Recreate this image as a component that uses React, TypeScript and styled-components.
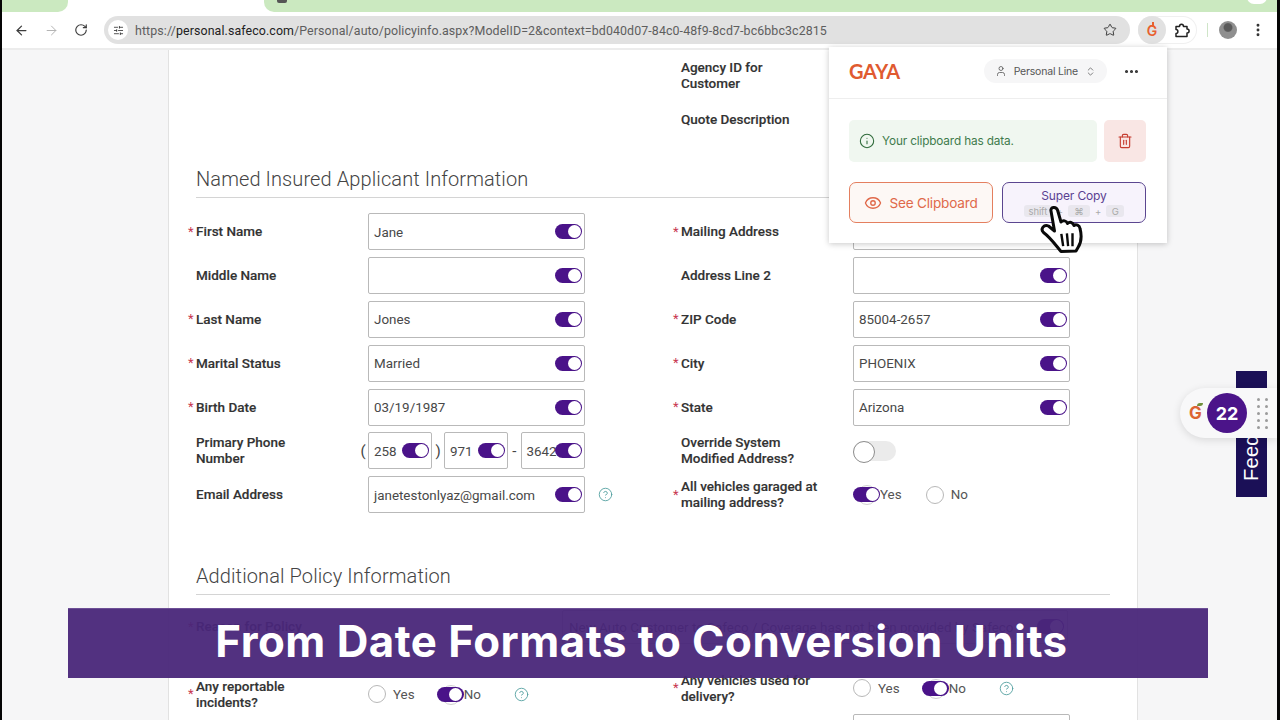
import React from "react";
import styled, { createGlobalStyle } from "styled-components";
import {
  ArrowLeft,
  ArrowRight,
  RotateCw,
  SlidersHorizontal,
  Star,
  EllipsisVertical,
  User,
  ChevronsUpDown,
  Ellipsis,
  Info,
  Trash2,
  Eye,
  CircleHelp,
} from "lucide-react";

const Global = createGlobalStyle`
  html, body { margin: 0; padding: 0; background: #050505; }
  * { box-sizing: border-box; }
`;

const Frame = styled.div`
  position: relative;
  width: 1280px;
  height: 720px;
  overflow: hidden;
  padding: 0 3px 0 2px;
  background: #050505;
  font-family: Roboto, "Liberation Sans", sans-serif;
`;

const Browser = styled.div`
  display: flex;
  flex-direction: column;
  height: 100%;
  background: #f6f6f7;
`;

const TabStrip = styled.div`
  display: grid;
  grid-template-columns: 66px 196px 1fr;
  height: 12px;
  background: #fff;
  flex: none;
`;

const GreenTab = styled.div<{ $side: "left" | "right" }>`
  position: relative;
  background: #cbe9c0;
  border-radius: ${(p) => (p.$side === "left" ? "0 0 10px 0" : "0 0 0 10px")};
`;

const TabGlyph = styled.span`
  position: absolute;
  left: 13px;
  top: 0;
  width: 10px;
  height: 3px;
  background: #555;
  border-radius: 0 0 2px 2px;
`;

const WindowDot = styled.span`
  position: absolute;
  right: 10px;
  top: -10px;
  width: 20px;
  height: 14px;
  background: #fff;
  border-radius: 8px;
`;

const Toolbar = styled.div`
  display: flex;
  align-items: center;
  height: 38px;
  flex: none;
  padding-left: 4px;
  background: #fff;
  border-bottom: 2px solid #ececec;
  position: relative;
`;

const NavButton = styled.button<{ $muted?: boolean }>`
  display: flex;
  align-items: center;
  justify-content: center;
  width: 30px;
  height: 28px;
  padding: 0;
  border: 0;
  background: transparent;
  color: ${(p) => (p.$muted ? "#b4b4b4" : "#3d3d3d")};
`;

const AddressBar = styled.div`
  display: flex;
  align-items: center;
  width: 1026px;
  height: 28px;
  margin-left: 8px;
  padding: 0 13px 0 4px;
  border-radius: 14px;
  background: #e1e1e1;
`;

const SiteChip = styled.span`
  display: flex;
  align-items: center;
  justify-content: center;
  width: 20px;
  height: 20px;
  border-radius: 50%;
  background: #fff;
  color: #333;
  flex: none;
`;

const Url = styled.span`
  flex: 1;
  margin-left: 7px;
  font-family: Roboto, sans-serif;
  font-size: 12.4px;
  letter-spacing: 0.1px;
  color: #5e5e5e;
  white-space: nowrap;
`;

const UrlHost = styled.span`
  color: #222;
`;

const ExtensionGroup = styled.div`
  display: flex;
  align-items: center;
  height: 28px;
  margin-left: 8px;
  border-radius: 14px;
  box-shadow: inset 0 0 0 1px #f0f0f0;
`;

const GayaExt = styled.span`
  position: relative;
  display: flex;
  align-items: center;
  justify-content: center;
  width: 28px;
  height: 28px;
  border-radius: 50%;
  background: #e1e1e1;
  font-family: Inter, sans-serif;
  font-weight: 600;
  font-size: 14px;
  color: #e8602f;
  &::after {
    content: "";
    position: absolute;
    left: 14px;
    top: 6px;
    width: 1.5px;
    height: 5px;
    background: #e8602f;
  }
`;

const PuzzleSlot = styled.span`
  display: flex;
  align-items: center;
  justify-content: center;
  width: 31px;
  color: #222;
`;

const ToolbarRule = styled.span`
  width: 1px;
  height: 14px;
  margin-left: 10px;
  background: #cfe5c8;
`;

const Avatar = styled.span`
  width: 18px;
  height: 18px;
  margin-left: 11px;
  border-radius: 50%;
  background: radial-gradient(circle at 50% 36%, #5a5a5a 0 26%, #8f8f8f 34% 100%);
`;

const KebabSlot = styled.span`
  display: flex;
  margin-left: 13px;
  color: #333;
`;

const Viewport = styled.div`
  flex: 1;
  overflow: hidden;
  padding-left: 166px;
`;

const Card = styled.main`
  width: 970px;
  height: 100%;
  padding: 10px 27px 0 19px;
  background: #fff;
  border-left: 1px solid #e2e2e2;
  border-right: 1px solid #e2e2e2;
`;

const TopFields = styled.div`
  display: flex;
  flex-direction: column;
  gap: 20px;
  margin-left: 493px;
  margin-top: -1px;
`;

const TopLabel = styled.div`
  width: 172px;
  font-size: 13.5px;
  font-weight: 500;
  line-height: 16px;
  color: #333;
  -webkit-text-stroke: 0.15px #333;
`;

const SectionTitle = styled.h2<{ $top: number }>`
  margin: ${(p) => p.$top}px 0 15px 8px;
  padding-bottom: 6px;
  border-bottom: 1px solid #d4d4d4;
  font-size: 20px;
  font-weight: 300;
  line-height: 24px;
  letter-spacing: 0.1px;
  color: #444;
`;

const FormGrid = styled.div`
  display: grid;
  grid-template-columns: 485px 1fr;
  grid-auto-rows: 37.8px;
  row-gap: 6px;
`;

const FieldRow = styled.div<{ $shift?: number }>`
  display: grid;
  grid-template-columns: 8px 172px 217px auto;
  align-items: center;
  height: 37.8px;
  margin-top: ${(p) => p.$shift ?? 0}px;
`;

const Star2 = styled.span`
  font-size: 13px;
  line-height: 16px;
  color: #c8384f;
`;

const Label = styled.label`
  margin-top: -1px;
  font-size: 13.5px;
  font-weight: 500;
  line-height: 16px;
  color: #333;
  -webkit-text-stroke: 0.15px #333;
`;

const InputBox = styled.div`
  display: flex;
  align-items: center;
  height: 37px;
  padding: 0 2px 0 5px;
  background: #fff;
  border: 1px solid #b9b9b9;
  border-radius: 2px;
`;

const Value = styled.span`
  flex: 1;
  min-width: 0;
  padding-top: 1px;
  font-size: 13.4px;
  color: #484848;
  white-space: nowrap;
`;

const Toggle = styled.span`
  position: relative;
  z-index: 1;
  flex: none;
  width: 27px;
  height: 15px;
  border-radius: 8px;
  background: #4a1389;
  &::after {
    content: "";
    position: absolute;
    right: 1.5px;
    top: 1px;
    width: 13px;
    height: 13px;
    border-radius: 50%;
    background: #fff;
  }
`;

const SwitchOff = styled.span`
  position: relative;
  display: block;
  width: 43px;
  height: 20px;
  border-radius: 10px;
  background: #ebebeb;
  &::after {
    content: "";
    position: absolute;
    left: 0;
    top: 0;
    width: 20px;
    height: 20px;
    border-radius: 50%;
    background: #fff;
    border: 1px solid #8d8d8d;
  }
`;

const PhoneGroup = styled.div`
  display: grid;
  grid-template-columns: 10px 64px 12px 64px 12.5px 64.5px;
  align-items: center;
  margin-left: -10px;
  width: 227px;
`;

const PhoneSep = styled.span`
  text-align: center;
  font-size: 15px;
  color: #444;
`;

const HelpMark = styled.span<{ $gap: number }>`
  display: flex;
  margin-left: ${(p) => p.$gap}px;
  color: #4f9e9e;
`;

const RadioLine = styled.div`
  display: flex;
  align-items: center;
  font-size: 13.4px;
  color: #555;
`;

const Radio = styled.span`
  width: 18px;
  height: 18px;
  margin-right: 7px;
  border-radius: 50%;
  background: #fff;
  border: 1px solid #b8b8b8;
`;

const OptionText = styled.span<{ $gap: number }>`
  margin-right: ${(p) => p.$gap}px;
`;

const RadioToggle = styled.span`
  position: relative;
  display: flex;
  &::before {
    content: "";
    position: absolute;
    left: 4px;
    top: -2px;
    width: 18px;
    height: 18px;
    border-radius: 50%;
    border: 1px solid #d0d0d0;
  }
`;

const FieldStub = styled.div`
  grid-column: 3;
  height: 37px;
  margin-top: 7px;
  background: #fff;
  border: 1px solid #b9b9b9;
  border-radius: 2px;
`;

const ReasonRow = styled.div`
  display: grid;
  grid-template-columns: 8px 366px 1fr;
  align-items: center;
  height: 34px;
  margin-top: 3px;
`;

const ReasonBox = styled.div`
  display: flex;
  align-items: center;
  width: 506px;
  height: 34px;
  padding: 0 3px 0 6px;
  border: 1px solid #b9b9b9;
  border-radius: 2px;
`;

const LowerGrid = styled.div`
  display: grid;
  grid-template-columns: 485px 1fr;
  margin-top: 30px;
`;

const Popup = styled.aside`
  position: absolute;
  z-index: 5;
  left: 829px;
  top: 47px;
  width: 338px;
  height: 196px;
  background: #fff;
  box-shadow: 0 1px 6px rgba(0, 0, 0, 0.22);
  font-family: Inter, sans-serif;
`;

const PopupHead = styled.header`
  display: flex;
  align-items: center;
  height: 52px;
  padding: 0 27px 3px 20px;
  border-bottom: 1px solid #eeeeee;
`;

const GayaLogo = styled.span`
  flex: 1;
  font-family: Lato, sans-serif;
  font-size: 20px;
  font-weight: 700;
  letter-spacing: -0.3px;
  color: #e05a30;
`;

const LinePill = styled.div`
  display: flex;
  align-items: center;
  gap: 7px;
  height: 24px;
  padding: 0 11px;
  margin-right: 16px;
  border-radius: 12px;
  background: #f6f6f7;
  font-size: 10.5px;
  letter-spacing: -0.2px;
  color: #555;
`;

const MoreButton = styled.span`
  display: flex;
  color: #333;
`;

const PopupBody = styled.div`
  display: flex;
  flex-direction: column;
  gap: 20px;
  padding: 21px 21px 0 20px;
`;

const AlertRow = styled.div`
  display: flex;
  gap: 7px;
`;

const AlertBox = styled.div`
  display: flex;
  align-items: center;
  gap: 7px;
  flex: 1;
  height: 42px;
  padding: 0 10px;
  border-radius: 5px;
  background: #f0f7f0;
  font-size: 11.8px;
  letter-spacing: -0.15px;
  color: #3f7b4c;
`;

const DeleteButton = styled.button`
  display: flex;
  align-items: center;
  justify-content: center;
  width: 42px;
  height: 42px;
  padding: 0;
  border: 0;
  border-radius: 5px;
  background: #f9e6e4;
  color: #c63d30;
`;

const ActionRow = styled.div`
  display: grid;
  grid-template-columns: 144px 144px;
  justify-content: space-between;
`;

const SeeButton = styled.button`
  display: flex;
  align-items: center;
  justify-content: center;
  gap: 7px;
  height: 41px;
  padding: 0;
  border: 1px solid #e47f5f;
  border-radius: 7px;
  background: #fdf8f5;
  font-family: Inter, sans-serif;
  font-size: 13.6px;
  letter-spacing: -0.2px;
  color: #e0694a;
`;

const CopyButton = styled.button`
  display: flex;
  flex-direction: column;
  align-items: center;
  justify-content: center;
  gap: 2px;
  height: 41px;
  padding: 0;
  border: 1px solid #5b4690;
  border-radius: 7px;
  background: #f7f3fc;
  font-family: Inter, sans-serif;
  font-size: 12px;
  letter-spacing: -0.15px;
  color: #5b3f92;
`;

const KeyRow = styled.span`
  display: flex;
  align-items: center;
  gap: 5px;
  font-size: 9.5px;
  color: #aaa;
`;

const KeyCap = styled.span<{ $w: number }>`
  display: flex;
  align-items: center;
  justify-content: center;
  width: ${(p) => p.$w}px;
  height: 12px;
  border-radius: 3px;
  background: #e9e7ee;
`;

const CursorMark = styled.svg`
  position: absolute;
  z-index: 6;
  left: 1038px;
  top: 205px;
  width: 48px;
  height: 48px;
`;

const FeedbackTab = styled.div`
  position: absolute;
  left: 1236px;
  top: 371px;
  width: 31px;
  height: 126px;
  display: flex;
  align-items: flex-start;
  justify-content: center;
  padding-bottom: 16px;
  background: #1b1057;
  overflow: hidden;
`;

const FeedbackText = styled.span`
  writing-mode: vertical-rl;
  transform: rotate(180deg);
  height: 110px;
  font-family: "Liberation Sans", sans-serif;
  font-size: 20px;
  letter-spacing: 0.3px;
  line-height: 31px;
  color: #fff;
`;

const ScoreWidget = styled.div`
  position: absolute;
  z-index: 4;
  left: 1180px;
  top: 388px;
  width: 97px;
  height: 50px;
  display: flex;
  align-items: center;
  padding-left: 9px;
  border-radius: 25px 0 0 25px;
  background: #f8f8f9;
  box-shadow: 0 2px 8px rgba(0, 0, 0, 0.12);
`;

const WidgetG = styled.span`
  position: relative;
  width: 17px;
  font-family: Inter, sans-serif;
  font-size: 17px;
  font-weight: 700;
  color: #dc6433;
  &::after {
    content: "";
    position: absolute;
    left: 8px;
    top: 0;
    width: 6px;
    height: 3px;
    border-radius: 3px 0;
    background: #6f8f3a;
  }
`;

const ScoreBubble = styled.span`
  display: flex;
  align-items: center;
  justify-content: center;
  width: 40px;
  height: 40px;
  margin-left: 1px;
  border-radius: 50%;
  background: #4b1489;
  font-family: Inter, sans-serif;
  font-size: 18px;
  font-weight: 700;
  color: #fff;
`;

const Grip = styled.span`
  display: grid;
  grid-template-columns: 3px 3px;
  gap: 4px 5px;
  margin-left: 10px;
`;

const GripDot = styled.span`
  width: 3px;
  height: 3px;
  border-radius: 50%;
  background: #9b9b9b;
`;

const Banner = styled.div`
  position: absolute;
  z-index: 5;
  left: 68px;
  top: 608px;
  width: 1140px;
  height: 70px;
  display: flex;
  align-items: center;
  justify-content: center;
  padding: 0 0 5px 7px;
  background: rgba(73, 38, 121, 0.95);
  border-top: 1px solid #6d4f96;
  font-family: Inter, sans-serif;
  font-size: 43.8px;
  font-weight: 700;
  letter-spacing: 0.5px;
  color: #fff;
`;

type Item = { label: string[]; required?: boolean; value: string };

const left: Item[] = [
  { label: ["First Name"], required: true, value: "Jane" },
  { label: ["Middle Name"], value: "" },
  { label: ["Last Name"], required: true, value: "Jones" },
  { label: ["Marital Status"], required: true, value: "Married" },
  { label: ["Birth Date"], required: true, value: "03/19/1987" },
];

const right: Item[] = [
  { label: ["Mailing Address"], required: true, value: "" },
  { label: ["Address Line 2"], value: "" },
  { label: ["ZIP Code"], required: true, value: "85004-2657" },
  { label: ["City"], required: true, value: "PHOENIX" },
  { label: ["State"], required: true, value: "Arizona" },
];

const Lines = ({ lines }: { lines: string[] }) => (
  <Label>
    {lines.map((l, i) => (
      <React.Fragment key={l}>
        {i > 0 && <br />}
        {l}
      </React.Fragment>
    ))}
  </Label>
);

const Row = ({
  lines,
  required,
  children,
  extra,
  shift,
}: {
  lines: string[];
  required?: boolean;
  children: React.ReactNode;
  extra?: React.ReactNode;
  shift?: number;
}) => (
  <FieldRow $shift={shift}>
    <Star2>{required ? "*" : ""}</Star2>
    <Lines lines={lines} />
    {children}
    {extra ?? <span />}
  </FieldRow>
);

const TextField = ({ value }: { value: string }) => (
  <InputBox>
    <Value>{value}</Value>
    <Toggle />
  </InputBox>
);

const Help = ({ gap }: { gap: number }) => (
  <HelpMark $gap={gap}>
    <CircleHelp size={15} strokeWidth={1.4} />
  </HelpMark>
);

const ExtensionIcon = () => (
  <svg width="16" height="16" viewBox="0 0 16 16" fill="none" stroke="currentColor" strokeWidth="1.5" strokeLinejoin="round">
    <path d="M2 4.500H5.500C5.500 1.500 9.500 1.500 9.500 4.500H13V7C15.800 7 15.800 11 13 11V14.500H2V11.500C4.500 11.500 4.500 7.500 2 7.500Z" />
  </svg>
);

const NoAnswer = () => (
  <RadioLine>
    <Radio />
    <OptionText $gap={22}>Yes</OptionText>
    <RadioToggle>
      <Toggle />
    </RadioToggle>
    <OptionText $gap={0}>No</OptionText>
    <Help gap={33} />
  </RadioLine>
);

export default function App() {
  return (
    <Frame>
      <Global />
      <Browser>
        <TabStrip>
          <GreenTab $side="left" />
          <span />
          <GreenTab $side="right">
            <TabGlyph />
            <WindowDot />
          </GreenTab>
        </TabStrip>
        <Toolbar>
          <NavButton>
            <ArrowLeft size={15} strokeWidth={2} />
          </NavButton>
          <NavButton $muted>
            <ArrowRight size={15} strokeWidth={1.6} />
          </NavButton>
          <NavButton>
            <RotateCw size={14} strokeWidth={2} />
          </NavButton>
          <AddressBar>
            <SiteChip>
              <SlidersHorizontal size={11} strokeWidth={1.8} />
            </SiteChip>
            <Url>
              https://<UrlHost>personal.safeco.com</UrlHost>
              /Personal/auto/policyinfo.aspx?ModelID=2&amp;context=bd040d07-84c0-48f9-8cd7-bc6bbc3c2815
            </Url>
            <Star size={14} strokeWidth={1.6} color="#333" />
          </AddressBar>
          <ExtensionGroup>
            <GayaExt>G</GayaExt>
            <PuzzleSlot>
              <ExtensionIcon />
            </PuzzleSlot>
          </ExtensionGroup>
          <ToolbarRule />
          <Avatar />
          <KebabSlot>
            <EllipsisVertical size={16} strokeWidth={2.4} />
          </KebabSlot>
        </Toolbar>
        <Viewport>
          <Card>
            <TopFields>
              <TopLabel>
                Agency ID for
                <br />
                Customer
              </TopLabel>
              <TopLabel>Quote Description</TopLabel>
            </TopFields>
            <SectionTitle $top={40}>Named Insured Applicant Information</SectionTitle>
            <FormGrid>
              {left.map((l, i) => (
                <React.Fragment key={l.label[0]}>
                  <Row lines={l.label} required={l.required}>
                    <TextField value={l.value} />
                  </Row>
                  <Row lines={right[i].label} required={right[i].required}>
                    <TextField value={right[i].value} />
                  </Row>
                </React.Fragment>
              ))}
              <Row lines={["Primary Phone", "Number"]}>
                <PhoneGroup>
                  <PhoneSep>(</PhoneSep>
                  <TextField value="258" />
                  <PhoneSep>)</PhoneSep>
                  <TextField value="971" />
                  <PhoneSep>-</PhoneSep>
                  <TextField value="3642" />
                </PhoneGroup>
              </Row>
              <Row lines={["Override System", "Modified Address?"]}>
                <SwitchOff />
              </Row>
              <Row lines={["Email Address"]} extra={<Help gap={13} />}>
                <TextField value="janetestonlyaz@gmail.com" />
              </Row>
              <Row lines={["All vehicles garaged at", "mailing address?"]} required>
                <RadioLine>
                  <RadioToggle>
                    <Toggle />
                  </RadioToggle>
                  <OptionText $gap={24}>Yes</OptionText>
                  <Radio />
                  <OptionText $gap={0}>No</OptionText>
                </RadioLine>
              </Row>
            </FormGrid>
            <SectionTitle $top={50}>Additional Policy Information</SectionTitle>
            <ReasonRow>
              <Star2>*</Star2>
              <Label>Reason for Policy</Label>
              <ReasonBox>
                <Value>New Auto Customer to Safeco / Coverage has not been provided by Safeco</Value>
                <Toggle />
              </ReasonBox>
            </ReasonRow>
            <LowerGrid>
              <Row lines={["Any reportable", "incidents?"]} required shift={2}>
                <NoAnswer />
              </Row>
              <div>
                <Row lines={["Any vehicles used for", "delivery?"]} required shift={-4}>
                  <NoAnswer />
                </Row>
                <FieldRow>
                  <FieldStub />
                </FieldRow>
              </div>
            </LowerGrid>
          </Card>
        </Viewport>
      </Browser>

      <Popup>
        <PopupHead>
          <GayaLogo>GAYA</GayaLogo>
          <LinePill>
            <User size={12} strokeWidth={1.6} />
            Personal Line
            <ChevronsUpDown size={11} strokeWidth={1.6} />
          </LinePill>
          <MoreButton>
            <Ellipsis size={17} strokeWidth={2.4} />
          </MoreButton>
        </PopupHead>
        <PopupBody>
          <AlertRow>
            <AlertBox>
              <Info size={16} strokeWidth={1.6} color="#2f6b3a" />
              Your clipboard has data.
            </AlertBox>
            <DeleteButton>
              <Trash2 size={16} strokeWidth={1.7} />
            </DeleteButton>
          </AlertRow>
          <ActionRow>
            <SeeButton>
              <Eye size={18} strokeWidth={1.8} />
              See Clipboard
            </SeeButton>
            <CopyButton>
              Super Copy
              <KeyRow>
                <KeyCap $w={28}>shift</KeyCap>+<KeyCap $w={22}>⌘</KeyCap>+<KeyCap $w={18}>G</KeyCap>
              </KeyRow>
            </CopyButton>
          </ActionRow>
        </PopupBody>
      </Popup>

      <CursorMark viewBox="0 0 48 48" aria-hidden="true">
        <path
          d="M13 6C12 2 18 1 19.500 5L23 17C25 15 28.500 15.500 29.500 18.500C31.500 16.500 35 17 36 20.500C38 19 41.500 20 42 23.500C44 31 43.500 37 40 42.500L38 46L23 46.500C19 42 13 33 5.500 27.500C2 24 6 19 10.500 21L16.500 26Z"
          fill="#fff"
          stroke="#0a0a0a"
          strokeWidth="3"
          strokeLinejoin="round"
        />
        <path
          d="M23.500 30L25 40M29 29.500L30 40M34.500 29.500L34.500 40"
          stroke="#0a0a0a"
          strokeWidth="2.4"
          strokeLinecap="square"
          fill="none"
        />
      </CursorMark>

      <FeedbackTab>
        <FeedbackText>Feedback</FeedbackText>
      </FeedbackTab>

      <ScoreWidget>
        <WidgetG>G</WidgetG>
        <ScoreBubble>22</ScoreBubble>
        <Grip>
          {Array.from({ length: 10 }, (_, i) => (
            <GripDot key={i} />
          ))}
        </Grip>
      </ScoreWidget>

      <Banner>From Date Formats to Conversion Units</Banner>
    </Frame>
  );
}
